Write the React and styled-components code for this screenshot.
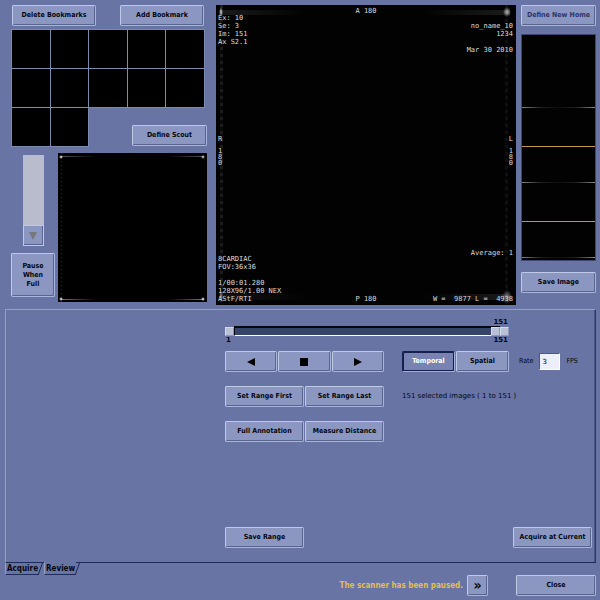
import { useState } from 'react';
import styled, { createGlobalStyle } from 'styled-components';

const BOOKMARKS = Array.from({ length: 12 }, (_, i) => i + 1);
const LAST_IMAGE = 151;

export default function App() {
  const [first, setFirst] = useState(1);
  const [last, setLast] = useState(LAST_IMAGE);
  const [current, setCurrent] = useState(LAST_IMAGE);
  const [order, setOrder] = useState("Temporal");
  const [rate, setRate] = useState("3");
  return (
    <Page>
      <GlobalStyle />
      <Top>
        <Left>
          <BookmarkBar>
            <Button $width={84}>Delete Bookmarks</Button>
            <Button $width={84}>Add Bookmark</Button>
          </BookmarkBar>
          <Bookmarks>
            {BOOKMARKS.map(n => <Thumb key={n} />)}
            <ScoutAction><Button $width={75}>Define Scout</Button></ScoutAction>
          </Bookmarks>
          <ScoutRow>
            <Queue>
              <Scroller>
                <div className="trough" />
                <button aria-label="Scroll down">
                  <svg width="8" height="8" viewBox="0 0 8 8"><path d="M0 0h8L4 8z" fill="#74787c" /></svg>
                </button>
              </Scroller>
              <Button className="pause" $width={44}>Pause<br />When<br />Full</Button>
            </Queue>
            <Scout />
          </ScoutRow>
        </Left>
        <Viewer>
          <Note className="top">A 180</Note>
          <Note className="top-left">{"Ex: 10\nSe: 3\nIm: 151\nAx S2.1"}</Note>
          <Note className="top-right">{"no_name_10\n1234\n\nMar 30 2010"}</Note>
          <Note className="side-left">{"R\n\n1\n8\n0"}</Note>
          <Note className="side-right">{"L\n\n1\n8\n0"}</Note>
          <Note className="average">Average: 1</Note>
          <Note className="bottom-left">{"8CARDIAC\nFOV:36x36\n\n1/00:01.280\n128X96/1.00 NEX\nAStF/RTI"}</Note>
          <Note className="bottom">P 180</Note>
          <Note className="bottom-right">{"W =  9877 L =  4938"}</Note>
        </Viewer>
        <Right>
          <Button $faded>Define New Home</Button>
          <Film>
            <Frame />
            <Frame $lined />
            <Frame $lined />
          </Film>
          <Button>Save Image</Button>
        </Right>
      </Top>

      <Panel>
        <Review>
          <Slider>
            <Marks><span>{current}</span></Marks>
            <Ranges>
              <input className="track" type="range" aria-label="Current image" min="1" max={LAST_IMAGE} value={current} onChange={e => setCurrent(Number(e.target.value))} />
              <input type="range" aria-label="Range first" min="1" max={LAST_IMAGE} value={first} onChange={e => setFirst(Number(e.target.value))} />
              <input type="range" aria-label="Range last" min="1" max={LAST_IMAGE} value={last} onChange={e => setLast(Number(e.target.value))} />
            </Ranges>
            <Marks><span>{first}</span><span>{last}</span></Marks>
          </Slider>
          <Row>
            <Group>
              <Button aria-label="Play backward">
                <svg width="8" height="8" viewBox="0 0 8 8"><path d="M8 0v8L0 4z" /></svg>
              </Button>
              <Button aria-label="Stop">
                <svg width="8" height="8" viewBox="0 0 8 8"><path d="M0 0h8v8H0z" /></svg>
              </Button>
              <Button aria-label="Play forward">
                <svg width="8" height="8" viewBox="0 0 8 8"><path d="M0 0v8l8-4z" /></svg>
              </Button>
            </Group>
            <Toggle>
              {["Temporal", "Spatial"].map(name => (
                <Button key={name} $pressed={order === name} aria-pressed={order === name} onClick={() => setOrder(name)}>{name}</Button>
              ))}
            </Toggle>
            <Rate>
              <label htmlFor="rate">Rate</label>
              <input id="rate" type="text" value={rate} onChange={e => setRate(e.target.value)} />
              <span>FPS</span>
            </Rate>
          </Row>
          <Row>
            <Group>
              <Button onClick={() => setFirst(current)}>Set Range First</Button>
              <Button onClick={() => setLast(current)}>Set Range Last</Button>
            </Group>
            <Info>{last - first + 1} selected images ( {first} to {last} )</Info>
          </Row>
          <Row>
            <Group>
              <Button>Full Annotation</Button>
              <Button>Measure Distance</Button>
            </Group>
          </Row>
          <PanelFooter>
            <Button $width={79}>Save Range</Button>
            <Button $width={79}>Acquire at Current</Button>
          </PanelFooter>
        </Review>
      </Panel>
      <Tabs role="tablist">
        <Tab role="tab" aria-selected="false">Acquire</Tab>
        <Tab role="tab" aria-selected="true" $active>Review</Tab>
      </Tabs>

      <Footer>
        <p>The scanner has been paused.</p>
        <Button className="more" $width={21} aria-label="More messages">»</Button>
        <Button $width={80}>Close</Button>
      </Footer>
    </Page>
  )
}

const GlobalStyle = createGlobalStyle`
  * {
    box-sizing: border-box;
  }
  body {
    background-color: #6874a3;
    margin: 0;
  }
`;
const Page = styled.main`
  color: #05070f;
  display: flex;
  flex-flow: column;
  font-family: "DejaVu Sans", sans-serif;
  font-size: 7px;
  min-height: 100vh;
  padding: 5px 4px 4px 5px;
`;
const Button = styled.button`
  align-items: center;
  background-color: ${p => p.$pressed ? "#7883b3" : "#8c97c1"};
  border: 1px solid;
  border-color: ${p => p.$pressed ? "#17204d #a4afd6 #a4afd6 #17204d" : "#c0c9e8 #a9b4da #a9b4da #c0c9e8"};
  border-radius: 2px;
  box-shadow: ${p => p.$pressed ? "inset 1px 1px #17204d, inset -1px -1px #17204d" : "inset -1px -1px #59648f"};
  color: ${p => p.$pressed ? "#fff" : p.$faded ? "#2c3568" : "#05070f"};
  display: flex;
  font: bold 7px/9px "DejaVu Sans Condensed", "DejaVu Sans", sans-serif;
  height: 21px;
  justify-content: center;
  min-width: 0;
  padding: 0;
  white-space: nowrap;
  width: ${p => p.$width ? `${p.$width}px` : "auto"};
`;
const Top = styled.section`
  display: grid;
  gap: 5px;
  grid-template-columns: 206fr 300fr 75fr;
`;
const Left = styled.div`
  display: flex;
  flex-flow: column;
  padding: 0 4px 0 6px;
`;
const BookmarkBar = styled.div`
  display: flex;
  justify-content: space-between;
  margin-bottom: 4px;
  padding: 0 3px 0 1px;
`;
const Bookmarks = styled.div`
  display: grid;
  gap: 1px;
  grid-template-columns: repeat(5, 1fr);
  margin-bottom: 7px;
  padding: 0 3px 0 1px;
`;
const Thumb = styled.div`
  background-color: #000;
  height: 38px;
  outline: 1px solid #7d8cae;
`;
const ScoutAction = styled.div`
  align-items: end;
  display: flex;
  grid-column: 4 / 6;
  justify-content: end;
  margin-right: -3px;
`;
const ScoutRow = styled.div`
  display: flex;
  gap: 3px;
`;
const Queue = styled.div`
  align-items: center;
  display: flex;
  flex-flow: column;
  gap: 7px;
  padding-top: 2px;
  .pause {
    height: 44px;
  }
`;
const Scroller = styled.div`
  display: flex;
  flex-flow: column;
  width: 21px;
  .trough {
    background-color: #b8bccd;
    height: 70px;
  }
  button {
    align-items: center;
    background-color: #8c97c1;
    border: 1px solid #c0c9e8;
    box-shadow: inset -1px -1px #59648f;
    display: flex;
    height: 21px;
    justify-content: center;
    padding: 0;
  }
`;
const Scout = styled.div`
  aspect-ratio: 1;
  background:
    radial-gradient(circle at 3px 4px, #fff, transparent 2px),
    radial-gradient(circle at calc(100% - 4px) 4px, #ddd, transparent 2px),
    radial-gradient(circle at 3px calc(100% - 3px), #fff, transparent 2px),
    radial-gradient(circle at calc(100% - 4px) calc(100% - 3px), #fff, transparent 2px),
    linear-gradient(90deg, #555, transparent 25%, transparent 75%, #555) 3px 3px / calc(100% - 6px) 1px no-repeat,
    linear-gradient(90deg, #777, transparent 25%, transparent 75%, #777) 3px calc(100% - 2px) / calc(100% - 6px) 1px no-repeat,
    repeating-linear-gradient(#262b26 0 1px, transparent 1px 4px) 3px 0 / 1px 100% no-repeat,
    #000;
  flex: 1;
`;
const Viewer = styled.div`
  align-self: start;
  aspect-ratio: 1;
  background:
    radial-gradient(ellipse 2px 5px at 5px 7px, #ddd, transparent),
    radial-gradient(ellipse 4px 5px at calc(100% - 9px) 7px, #bbb, transparent),
    radial-gradient(ellipse 2px 6px at 5px calc(100% - 9px), #888, transparent),
    radial-gradient(ellipse 5px 7px at calc(100% - 9px) calc(100% - 8px), #777, transparent),
    linear-gradient(90deg, #1a1a1a, transparent 30%, transparent 70%, #1c1c1c) 4px 5px / calc(100% - 10px) 5px no-repeat,
    linear-gradient(90deg, #141414, transparent 30%, transparent 70%, #1c1c1c) 4px calc(100% - 5px) / calc(100% - 10px) 6px no-repeat,
    repeating-linear-gradient(#1c1c1c 0 3px, #080808 3px 7px) 4px 0 / 3px 100% no-repeat,
    repeating-linear-gradient(#101010 0 3px, #050505 3px 7px) calc(100% - 8px) 0 / 3px 100% no-repeat,
    #020202;
  position: relative;
`;
const Note = styled.pre`
  color: #dcdcdc;
  font: 7px/8px "DejaVu Sans Mono", "Liberation Mono", monospace;
  margin: 0;
  position: absolute;
  &.top {
    left: 0;
    right: 0;
    text-align: center;
    top: 2px;
  }
  &.top-left {
    left: 2px;
    top: 9px;
  }
  &.top-right {
    right: 3px;
    text-align: right;
    top: 17px;
  }
  &.side-left, &.side-right {
    line-height: 6px;
    top: 131px;
  }
  &.side-left {
    left: 2px;
  }
  &.side-right {
    right: 3px;
  }
  &.average {
    bottom: 48px;
    right: 3px;
  }
  &.bottom-left {
    bottom: 2px;
    left: 2px;
  }
  &.bottom {
    bottom: 2px;
    left: 0;
    right: 0;
    text-align: center;
  }
  &.bottom-right {
    bottom: 2px;
    right: 3px;
  }
`;
const Right = styled.div`
  display: flex;
  flex-flow: column;
`;
const Film = styled.div`
  background-color: #000;
  border: 1px solid #3c4672;
  margin: 8px 0 11px;
`;
const Frame = styled.div`
  background:
    linear-gradient(90deg, #888, #222 25%, #0c0c0c 50%, #222 75%, #888) 0 calc(100% - 2px) / 100% 1px no-repeat,
    ${p => p.$lined ? "linear-gradient(#c4964a, #c4964a) 0 36px / 100% 1px no-repeat," : ""}
    #020202;
  height: 75px;
`;
const Panel = styled.section`
  border: 1px solid;
  border-color: #93a0ca #2c3768 #1f2a5c #93a0ca;
  box-shadow: inset -1px 0 #4a5585;
  display: grid;
  flex: 1;
  grid-template-columns: 219fr 367fr;
  margin-top: 4px;
  padding: 8px 3px 14px 0;
`;
const Review = styled.div`
  display: flex;
  flex-flow: column;
  gap: 14px;
  grid-column: 2;
`;
const Slider = styled.div`
  margin-bottom: -7px;
  width: 284px;
`;
const Marks = styled.div`
  display: flex;
  font: bold 7px/8px "DejaVu Sans", sans-serif;
  justify-content: space-between;
  padding: 0 1px;
  span:only-child {
    margin-left: auto;
  }
`;
const Ranges = styled.div`
  display: grid;
  input {
    appearance: none;
    background: none;
    grid-area: 1 / 1;
    height: 10px;
    margin: 0;
    pointer-events: none;
    width: 100%;
  }
  .track {
    background-color: #34446b;
    border: 1px solid;
    border-color: #05070f #fff #fff #05070f;
    border-width: 2px 0 1px 1px;
    margin: 0 9px;
    width: auto;
  }
  input::-webkit-slider-thumb {
    appearance: none;
    background-color: #b9c1d6;
    border: 1px solid;
    border-color: #d4daea #8e98b4 #8e98b4 #d4daea;
    height: 9px;
    pointer-events: auto;
    width: 9px;
  }
`;
const Row = styled.div`
  align-items: center;
  display: flex;
`;
const Group = styled.div`
  display: flex;
  gap: 1px;
  margin-right: 18px;
  width: 159px;
  button {
    flex: 1;
  }
`;
const Toggle = styled.div`
  display: flex;
  gap: 1px;
  width: 107px;
  button {
    flex: 1;
  }
`;
const Rate = styled.div`
  align-items: center;
  display: flex;
  font: 7px/9px "DejaVu Sans Condensed", "DejaVu Sans", sans-serif;
  gap: 6px;
  margin-left: 10px;
  input {
    background-color: #eceef8;
    border: 1px solid;
    border-color: #4c5784 #fff #fff #4c5784;
    font: 7px "DejaVu Sans", sans-serif;
    height: 17px;
    padding: 0 2px;
    width: 21px;
  }
`;
const Info = styled.span`
  font: 7px/9px "DejaVu Sans", sans-serif;
`;
const PanelFooter = styled.div`
  display: flex;
  justify-content: space-between;
  margin-top: auto;
`;
const Tabs = styled.div`
  display: flex;
  gap: 1px;
  margin-top: -1px;
`;
const Tab = styled.button`
  background-color: #6874a3;
  border: 0;
  border-bottom: 1px solid #1f2a5c;
  border-left: 1px solid #93a0ca;
  border-top: 1px solid ${p => p.$active ? "#6874a3" : "#1f2a5c"};
  color: #05070f;
  font: bold 8px/11px "DejaVu Sans Condensed", "DejaVu Sans", sans-serif;
  height: 13px;
  margin-right: 4px;
  padding: 0 1px;
  position: relative;
  &::after {
    border-right: 1px solid #1f2a5c;
    content: "";
    height: 13px;
    position: absolute;
    right: -2px;
    top: -1px;
    transform: skewX(-20deg);
    width: 1px;
  }
`;
const Footer = styled.footer`
  align-items: center;
  display: flex;
  justify-content: end;
  p {
    color: #e6bd4e;
    font: bold 8px/11px "DejaVu Sans Condensed", "DejaVu Sans", sans-serif;
    margin: 0 4px 0 0;
  }
  .more {
    font-size: 14px;
    margin-right: 28px;
  }
`;
